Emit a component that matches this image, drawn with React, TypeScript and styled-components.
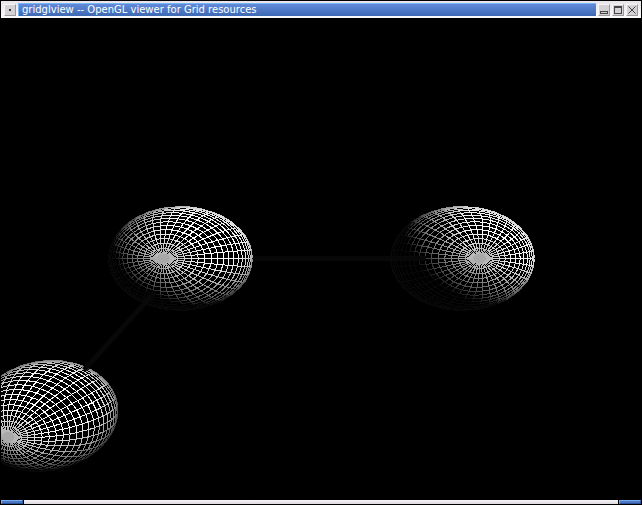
import React from "react";
import styled, { createGlobalStyle } from "styled-components";

const GlobalStyle = createGlobalStyle`
  html, body, #root { height: 100%; margin: 0; background: #000; }
  * { box-sizing: border-box; }
`;

const Window = styled.main`
  display: flex;
  flex-direction: column;
  height: 100%;
  padding: 1px;
  overflow: hidden;
  background: #000;
`;

const TitleBar = styled.header`
  display: flex;
  flex: none;
  align-items: center;
  gap: 2px;
  height: 17px;
  padding: 2px 3px;
  background: linear-gradient(#e9e3ea, #fbfafb);
`;

const TitleButton = styled.button`
  display: flex;
  flex: none;
  align-items: center;
  justify-content: center;
  width: 12px;
  height: 12px;
  padding: 0;
  border: 1px solid;
  border-color: #f4f4f4 #999 #999 #f4f4f4;
  background: #d4d2d4;
`;

const Caption = styled.h1`
  flex: 1;
  min-width: 0;
  height: 13px;
  margin: 0;
  padding-left: 3px;
  overflow: hidden;
  white-space: nowrap;
  border-top: 1px solid #75b5f5;
  border-left: 1px solid #75b5f5;
  background: linear-gradient(#618bd8, #3d68b4);
  color: #fff;
  font: 400 10px/11px "DejaVu Sans", sans-serif;
`;

const Viewport = styled.section`
  flex: 1;
  min-height: 0;
  overflow: hidden;
`;

const Scene = styled.svg`
  display: block;
  width: 100%;
  height: 100%;
`;

const ResizeBar = styled.footer`
  display: flex;
  flex: none;
  gap: 1px;
  height: 4px;
`;

const Corner = styled.div`
  width: 22px;
  border: 1px solid;
  border-color: #78aaf0 #2d5296 #2d5296 #78aaf0;
  background: #4a77c6;
`;

const Edge = styled.div`
  flex: 1;
  background: linear-gradient(#f5f3f5, #dcdadc);
`;

type Vec = [number, number, number];
const dot = (a: Vec, b: Vec) => a[0] * b[0] + a[1] * b[1] + a[2] * b[2];
const cross = (a: Vec, b: Vec): Vec => [
  a[1] * b[2] - a[2] * b[1],
  a[2] * b[0] - a[0] * b[2],
  a[0] * b[1] - a[1] * b[0],
];
const unit = (a: Vec): Vec => {
  const n = Math.hypot(...a);
  return [a[0] / n, a[1] / n, a[2] / n];
};

interface GlobeProps {
  cx: number;
  cy: number;
  rx: number;
  ry: number;
  tilt: number;
  pole: [number, number];
  light: Vec;
}

const SLICES = 40;
const STACKS = 32;

/* A lit latitude/longitude wireframe; x runs right, y down, z to the viewer. */
function Globe({ cx, cy, rx, ry, tilt, pole, light }: GlobeProps) {
  const p: Vec = [pole[0], pole[1], Math.sqrt(1 - pole[0] ** 2 - pole[1] ** 2)];
  const u = unit(cross([0, 1, 0], p));
  const v = cross(p, u);
  const l = unit(light);
  const at = (i: number, j: number): Vec => {
    const t = (i * Math.PI) / STACKS;
    const f = (j * 2 * Math.PI) / SLICES;
    const a = Math.sin(t) * Math.cos(f);
    const b = Math.sin(t) * Math.sin(f);
    const c = Math.cos(t);
    return [0, 1, 2].map((k) => a * u[k] + b * v[k] + c * p[k]) as Vec;
  };
  const co = Math.cos(tilt);
  const si = Math.sin(tilt);
  const xy = (q: Vec) => {
    const x = q[0] * rx;
    const y = q[1] * ry;
    return `${(cx + x * co - y * si).toFixed(1)} ${(cy + x * si + y * co).toFixed(1)}`;
  };
  const shades: Record<number, string> = {};
  const add = (a: Vec, b: Vec) => {
    if (a[2] + b[2] < 0) return;
    const n = unit([a[0] + b[0], a[1] + b[1], a[2] + b[2]]);
    const lit = 8 + Math.max(0, dot(n, l) + 0.08) * 270;
    const rim = 255 - 50 * (1 - n[2]) ** 2;
    const cap = 164 + 150 * Math.acos(Math.min(1, dot(n, p)));
    const shade = Math.round(Math.min(rim, lit, cap) / 8) * 8;
    shades[shade] = (shades[shade] || "") + `M${xy(a)}L${xy(b)}`;
  };
  for (let i = 0; i < STACKS; i++) {
    for (let j = 0; j < SLICES; j++) {
      add(at(i, j), at(i + 1, j));
      if (i > 0) add(at(i, j), at(i, j + 1));
    }
  }
  return (
    <g fill="none" strokeWidth="1" shapeRendering="crispEdges">
      {Object.entries(shades).map(([g, d]) => (
        <path key={g} d={d} stroke={`rgb(${g},${g},${g})`} />
      ))}
    </g>
  );
}

export default function App() {
  return (
    <>
      <GlobalStyle />
      <Window>
        <TitleBar>
          <TitleButton aria-label="Window menu">
            <svg width="10" height="10"><path d="M4 4h2v2H4z" fill="#333" /></svg>
          </TitleButton>
          <Caption>gridglview -- OpenGL viewer for Grid resources</Caption>
          <TitleButton aria-label="Minimize">
            <svg width="10" height="10" shapeRendering="crispEdges"><path d="M1 6h8v3H1zM2 7v1h6V7z" fill="#444" fillRule="evenodd" /></svg>
          </TitleButton>
          <TitleButton aria-label="Maximize">
            <svg width="10" height="10" shapeRendering="crispEdges"><path d="M1 1h8v8H1zM2 3v5h6V3z" fill="#444" fillRule="evenodd" /></svg>
          </TitleButton>
          <TitleButton aria-label="Close">
            <svg width="10" height="10"><path d="M1.500 1.500l7 7M8.500 1.500l-7 7" stroke="#444" /></svg>
          </TitleButton>
        </TitleBar>
        <Viewport>
          <Scene viewBox="1 18 640 482" preserveAspectRatio="xMidYMid slice" role="img" aria-label="Three linked grid resources">
            <Globe cx={180.5} cy={258.5} rx={72} ry={52} tilt={0} pole={[-0.24, 0]} light={[0.36, -0.42, 0.62]} />
            <Globe cx={462.5} cy={258.5} rx={72} ry={52} tilt={0} pole={[0.24, 0]} light={[0.56, -0.46, 0.42]} />
            <Globe cx={45.5} cy={416} rx={73} ry={55} tilt={-0.17} pole={[-0.55, 0.26]} light={[0.14, -0.25, 0.85]} />
            <g stroke="#080808" strokeWidth="5">
              <path d="M253 258.500H426" />
              <path d="M155 292L84 370" />
            </g>
          </Scene>
        </Viewport>
        <ResizeBar>
          <Corner />
          <Edge />
          <Corner />
        </ResizeBar>
      </Window>
    </>
  );
}
